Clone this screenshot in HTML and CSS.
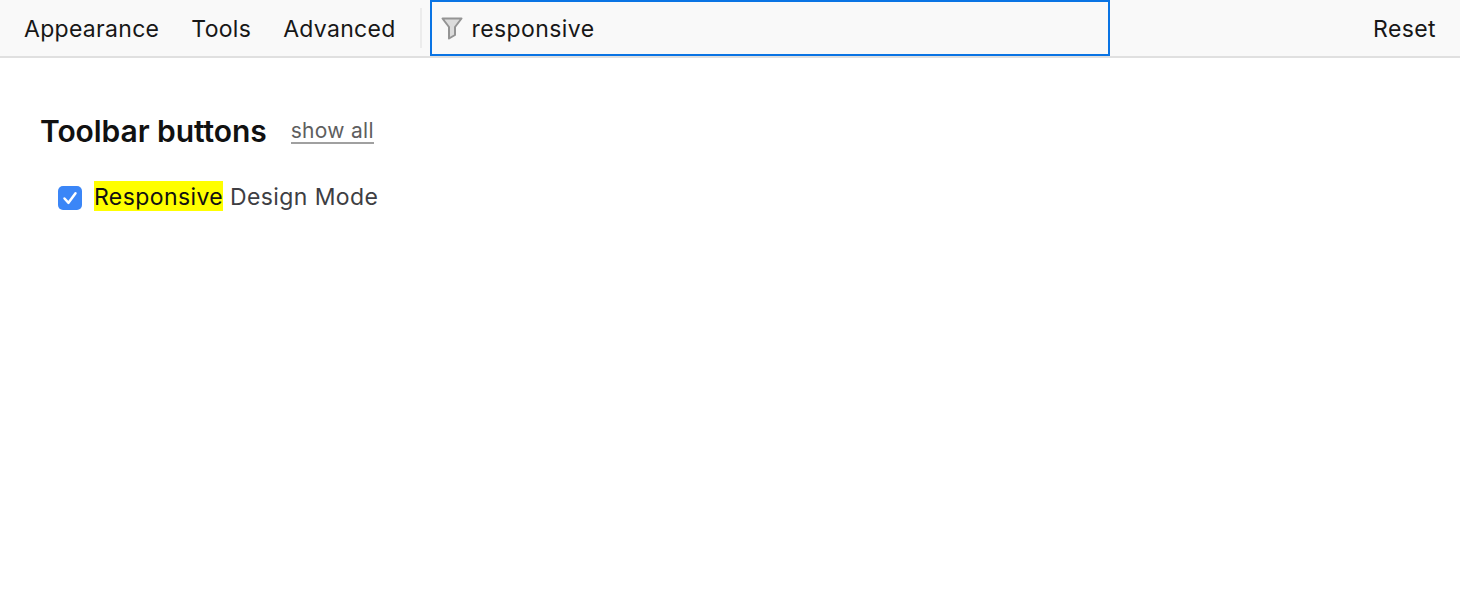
FILE: index.html
```html
<!DOCTYPE html>
<html lang="en">
<head>
    <meta charset="UTF-8">
    <title>Customize</title>
    <link rel="stylesheet" href="styles.css">
</head>
<body>
    <div class="toolbar">
        <a class="tab">Appearance</a>
        <a class="tab">Tools</a>
        <a class="tab">Advanced</a>
        <div class="divider"></div>
        <div class="filter">
            <svg class="filter-icon" width="22" height="24" viewBox="0 0 22 24">
                <path d="M1.500 2.500h19l-6.500 8.500v8l-6 3.500v-11.500z" fill="#dcdcdc" stroke="#949494" stroke-width="2" stroke-linejoin="round"/>
            </svg>
            <span class="filter-text">responsive</span>
        </div>
        <a class="reset">Reset</a>
    </div>

    <div class="content">
        <div class="section-head">
            <h2>Toolbar buttons</h2>
            <a class="show-all">show all</a>
        </div>
        <div class="option">
            <span class="check">
                <svg width="24" height="24" viewBox="0 0 24 24">
                    <path d="M6.500 12.500l4 4.300 7-9.600" fill="none" stroke="#fff" stroke-width="2.500" stroke-linecap="round" stroke-linejoin="round"/>
                </svg>
            </span>
            <span class="label"><mark>Responsive</mark> Design Mode</span>
        </div>
    </div>
</body>
</html>
```

FILE: styles.css
```css
body {
    margin: 0;
    background: #fff;
    font-family: 'Inter', 'Liberation Sans', sans-serif;
}
.toolbar {
    display: flex;
    align-items: center;
    height: 56px;
    background: #f9f9f9;
    border-bottom: 2px solid #e0e0e0;
    padding-left: 24px;
    padding-right: 24px;
}
.tab {
    font-size: 23px;
    letter-spacing: 0.3px;
    color: #171717;
    margin-right: 32px;
    padding-top: 2px;
}
.divider {
    width: 2px;
    height: 40px;
    background: #ececec;
    margin-left: -8px;
    margin-right: 8px;
}
.filter {
    display: flex;
    align-items: center;
    box-sizing: border-box;
    width: 680px;
    height: 56px;
    border: 2px solid #0a74e4;
    padding-left: 9px;
}
.filter-icon {
    margin-right: 9px;
}
.filter-text {
    font-size: 23px;
    letter-spacing: 0.4px;
    color: #171717;
    padding-top: 2px;
}
.reset {
    margin-left: auto;
    font-size: 23px;
    letter-spacing: 0.4px;
    color: #171717;
    padding-top: 2px;
}
.content {
    padding: 55px 40px 0;
}
.section-head {
    display: flex;
    align-items: center;
}
h2 {
    margin: 0;
    font-size: 30px;
    font-weight: 600;
    letter-spacing: -0.07px;
    color: #111;
}
.show-all {
    margin-left: 24px;
    padding-top: 1px;
    font-size: 21px;
    letter-spacing: 0.3px;
    color: #5e5e5e;
    border-bottom: 2px solid #a0a0a0;
    line-height: 23px;
}
.option {
    display: flex;
    align-items: center;
    margin-top: 34px;
    margin-left: 18px;
}
.check {
    display: flex;
    width: 24px;
    height: 24px;
    margin-top: 2px;
    border-radius: 5px;
    background: #3b86f7;
    margin-right: 12px;
}
.label {
    font-size: 23px;
    letter-spacing: 0.4px;
    color: #3e3e43;
}
mark {
    background: #ffff00;
    color: #111;
    padding: 2px 0 4px;
}
```
